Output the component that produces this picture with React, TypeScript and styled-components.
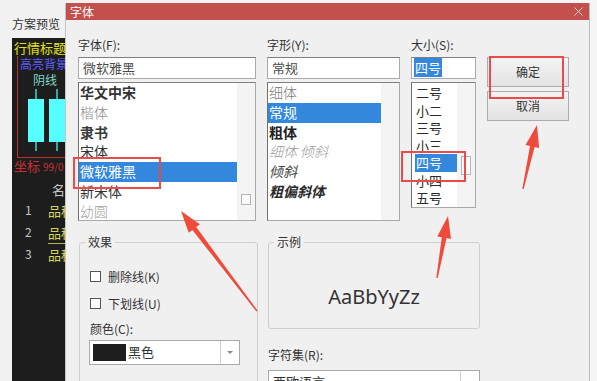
import React from "react";
import styled, { createGlobalStyle } from "styled-components";

const GlobalStyle = createGlobalStyle`
  html, body { margin: 0; padding: 0; background: #f5f5f5; }
  body { font-family: "Noto Sans CJK SC", "Noto Sans", sans-serif; }
  * { box-sizing: border-box; }
`;

const Desktop = styled.div`
  position: relative;
  width: 597px;
  height: 381px;
  overflow: hidden;
  background: #f5f5f5;
`;

/* ---------- window behind the dialog ---------- */

const BackWindow = styled.div`
  position: absolute;
  left: 0;
  top: 0;
  width: 200px;
  height: 381px;
  background: #f1f1f1;
  padding: 17px 0 0 12px;
  display: flex;
  flex-direction: column;
`;

const BackCaption = styled.div`
  font-size: 12px;
  line-height: 14px;
  color: #333;
  margin-bottom: 7px;
`;

const PreviewPanel = styled.div`
  flex: 1;
  width: 160px;
  background: #1d1d1d;
  padding: 2px 0 0 2px;
  display: flex;
  flex-direction: column;
  font-size: 13px;
  white-space: nowrap;
`;

const PanelTitle = styled.div`
  color: #e4e41c;
  line-height: 15px;
`;

const ChartBox = styled.div`
  margin: 1px 0 0 3px;
  border-left: 1px solid #b83030;
  border-bottom: 1px solid #b83030;
  padding-bottom: 5px;
  display: flex;
  flex-direction: column;
`;

const ChartText = styled.div<{ $color: string; $indent: number }>`
  color: ${(p) => p.$color};
  font-size: 12px;
  line-height: 16px;
  padding-left: ${(p) => p.$indent}px;
`;

const AxisLabel = styled.div`
  color: #c83030;
  line-height: 14px;
  margin-top: 1px;
  span { font-size: 10px; }
`;

const ColumnHead = styled.div`
  color: #c8c8c8;
  line-height: 14px;
  margin-top: 9px;
  padding-left: 38px;
  margin-bottom: 2px;
`;

const QuoteRow = styled.div`
  display: flex;
  height: 22px;
  line-height: 22px;
`;

const RowNo = styled.span`
  width: 34px;
  padding-left: 11px;
  color: #c8c8c8;
  font-size: 12px;
`;

const RowName = styled.span<{ $rule?: boolean }>`
  color: #d6d65a;
  border-top: 1px solid ${(p) => (p.$rule ? "#b4b45a" : "transparent")};
  padding-right: 40px;
`;

/* ---------- font dialog ---------- */

const Dialog = styled.div`
  position: absolute;
  left: 65px;
  top: 3px;
  width: 525px;
  height: 400px;
  background: #f0f0f0;
  border-left: 1px solid #c4c4c4;
  border-right: 1px solid #bdbdbd;
  display: flex;
  flex-direction: column;
`;

const TitleBar = styled.div`
  height: 22px;
  background: #c4504e;
  display: flex;
  align-items: center;
  justify-content: space-between;
  padding: 0 6px 0 4px;
  color: #fff;
  font-size: 12px;
`;

const Body = styled.div`
  padding: 18px 0 0 12px;
`;

const TopGrid = styled.div`
  display: grid;
  grid-template-columns: 178px 133px 65px 82px;
  column-gap: 11px;
`;

const Column = styled.div`
  display: flex;
  flex-direction: column;
`;

const Label = styled.div`
  height: 14px;
  font-size: 12px;
  line-height: 14px;
  color: #333;
  white-space: nowrap;
`;

const FieldLabel = styled(Label)`
  margin-bottom: 5px;
`;

const TextBox = styled.div`
  height: 22px;
  background: #fff;
  border: 1px solid #ababab;
  border-top-color: #7f7f7f;
  padding: 0 4px;
  font-size: 13px;
  line-height: 20px;
  color: #4a4a4a;
  white-space: nowrap;
`;

const SelectedText = styled.span`
  background: #3388de;
  color: #fff;
  padding: 0 1px;
  margin-left: -2px;
`;

const ListBox = styled.div<{ $h: number }>`
  margin-top: 3px;
  height: ${(p) => p.$h}px;
  background: #fff;
  border: 1px solid #a8a8a8;
  border-left-color: #707070;
  border-top-color: #808080;
  display: flex;
  overflow: hidden;
`;

const ListItems = styled.div<{ $pad: number; $top: number }>`
  flex: 1;
  padding: ${(p) => p.$top}px 0 0 ${(p) => p.$pad}px;
  min-width: 0;
`;

const Item = styled.div<{
  $h: number;
  $size: number;
  $sel?: boolean;
  $color?: string;
  $bold?: boolean;
  $light?: boolean;
  $italic?: boolean;
}>`
  height: ${(p) => p.$h}px;
  line-height: ${(p) => p.$h}px;
  padding-left: 1px;
  font-size: ${(p) => p.$size}px;
  white-space: nowrap;
  color: ${(p) => (p.$sel ? "#fff" : p.$color || "#2a2a2a")};
  background: ${(p) => (p.$sel ? "#3388de" : "transparent")};
  font-weight: ${(p) => (p.$bold ? 700 : p.$light ? 300 : 400)};
  font-style: ${(p) => (p.$italic ? "italic" : "normal")};
`;

const ScrollStrip = styled.div<{ $thumbTop: number }>`
  width: 18px;
  background: #f4f4f4;
  padding: ${(p) => p.$thumbTop}px 0 0 4px;
`;

const Thumb = styled.div<{ $h: number }>`
  width: 10px;
  height: ${(p) => p.$h}px;
  border: 1px solid #b4b4b4;
  background: #fafafa;
`;

const ButtonColumn = styled.div`
  padding-top: 19px;
  display: flex;
  flex-direction: column;
  gap: 4px;
`;

const Button = styled.div`
  height: 30px;
  border: 1px solid #adadad;
  background: linear-gradient(#f4f4f4, #e2e2e2);
  font-size: 12px;
  line-height: 28px;
  text-align: center;
  color: #333;
`;

const Bottom = styled.div`
  display: flex;
  gap: 10px;
  margin: 14px 0 0 1px;
`;

const Group = styled.fieldset<{ $w: number; $h: number }>`
  margin: 0;
  width: ${(p) => p.$w}px;
  height: ${(p) => p.$h}px;
  border: 1px solid #cfcfcf;
  border-radius: 3px;
  padding: 19px 10px 0 10px;
  min-width: 0;
`;

const Legend = styled.legend`
  font-size: 12px;
  line-height: 14px;
  color: #333;
  padding: 0 3px;
  margin-left: -5px;
`;

const CheckRow = styled.div`
  display: flex;
  align-items: center;
  gap: 7px;
  height: 16px;
  margin-bottom: 11px;
  font-size: 12px;
  color: #333;
`;

const CheckBox = styled.span`
  width: 11px;
  height: 11px;
  background: #fff;
  border: 1px solid #555;
`;

const ColorLabel = styled(Label)`
  margin-top: 3px;
  margin-bottom: 4px;
`;

const ComboBox = styled.div<{ $w: number; $h: number }>`
  width: ${(p) => p.$w}px;
  height: ${(p) => p.$h}px;
  background: #fff;
  border: 1px solid #a9a9a9;
  display: flex;
  align-items: stretch;
  font-size: 13px;
  color: #333;
`;

const ColorCombo = styled(ComboBox)`
  margin-left: -1px;
`;

const Swatch = styled.span`
  width: 33px;
  margin: 3px 2px 3px 3px;
  background: #1e1e1e;
`;

const ComboText = styled.span<{ $pad: number }>`
  flex: 1;
  padding-left: ${(p) => p.$pad}px;
  line-height: 22px;
  white-space: nowrap;
`;

const DropButton = styled.span`
  width: 19px;
  border-left: 1px solid #d4d4d4;
  display: flex;
  align-items: center;
  justify-content: center;
  &::after {
    content: "";
    border-left: 3px solid transparent;
    border-right: 3px solid transparent;
    border-top: 3px solid #8a8a8a;
  }
`;

const RightColumn = styled.div`
  display: flex;
  flex-direction: column;
`;

const SampleText = styled.div`
  padding-top: 18px;
  text-align: center;
  font-family: "Noto Sans", "Open Sans", sans-serif;
  font-size: 20px;
  line-height: 22px;
  color: #333;
`;

const CharsetLabel = styled(Label)`
  margin: 19px 0 8px;
`;

const Overlay = styled.svg`
  position: absolute;
  left: 0;
  top: 0;
  pointer-events: none;
`;

type Row = { t: string; sel?: boolean; color?: string; bold?: boolean; light?: boolean; italic?: boolean };

const fonts: Row[] = [
  { t: "华文中宋", bold: true, color: "#333" },
  { t: "楷体", color: "#8c8c8c", light: true },
  { t: "隶书", bold: true, color: "#3a3a3a" },
  { t: "宋体", color: "#333" },
  { t: "微软雅黑", sel: true },
  { t: "新宋体", color: "#333" },
  { t: "幼圆", color: "#a0a0a0", light: true },
];

const styles: Row[] = [
  { t: "细体", color: "#7a7a7a", light: true },
  { t: "常规", sel: true },
  { t: "粗体", bold: true, color: "#222" },
  { t: "细体 倾斜", italic: true, light: true, color: "#9a9a9a" },
  { t: "倾斜", italic: true, color: "#444" },
  { t: "粗偏斜体", italic: true, bold: true, color: "#2a2a2a" },
];

const sizes: Row[] = [
  { t: "二号" },
  { t: "小二" },
  { t: "三号" },
  { t: "小三" },
  { t: "四号", sel: true },
  { t: "小四" },
  { t: "五号" },
];

function arrow(tx: number, ty: number, px: number, py: number) {
  const dx = px - tx;
  const dy = py - ty;
  const len = Math.hypot(dx, dy);
  const ux = dx / len;
  const uy = dy / len;
  const nx = -uy;
  const ny = ux;
  const head = 22;
  const bx = px - ux * head;
  const by = py - uy * head;
  const pts: [number, number][] = [
    [tx + nx * 0.7, ty + ny * 0.7],
    [bx + nx * 2.4, by + ny * 2.4],
    [bx + nx * 7, by + ny * 7],
    [px, py],
    [bx - nx * 7, by - ny * 7],
    [bx - nx * 2.4, by - ny * 2.4],
    [tx - nx * 0.7, ty - ny * 0.7],
  ];
  return pts.map(([x, y]) => `${x.toFixed(1)},${y.toFixed(1)}`).join(" ");
}

const renderRows = (rows: Row[], h: number, size: number) =>
  rows.map((r) => (
    <Item
      key={r.t}
      $h={h}
      $size={size}
      $sel={r.sel}
      $color={r.color}
      $bold={r.bold}
      $light={r.light}
      $italic={r.italic}
    >
      {r.t}
    </Item>
  ));

export default function App() {
  return (
    <>
      <GlobalStyle />
      <Desktop>
        <BackWindow>
          <BackCaption>方案预览</BackCaption>
          <PreviewPanel>
            <PanelTitle>行情标题</PanelTitle>
            <ChartBox>
              <ChartText $color="#5c5cff" $indent={2}>高亮背景</ChartText>
              <ChartText $color="#7fd6c6" $indent={15}>阴线</ChartText>
              <svg width="60" height="64" viewBox="0 0 60 64">
                <line x1="18" y1="1" x2="18" y2="63" stroke="#5ff" strokeWidth="1.2" />
                <line x1="39" y1="1" x2="39" y2="63" stroke="#5ff" strokeWidth="1.2" />
                <rect x="10" y="11" width="16" height="43" fill="#5ff" />
                <rect x="31" y="11" width="16" height="43" fill="#5ff" />
              </svg>
            </ChartBox>
            <AxisLabel>
              坐标 <span>99/0</span>
            </AxisLabel>
            <ColumnHead>名</ColumnHead>
            <QuoteRow>
              <RowNo>1</RowNo>
              <RowName>品种</RowName>
            </QuoteRow>
            <QuoteRow>
              <RowNo>2</RowNo>
              <RowName>品种</RowName>
            </QuoteRow>
            <QuoteRow>
              <RowNo>3</RowNo>
              <RowName $rule>品种</RowName>
            </QuoteRow>
          </PreviewPanel>
        </BackWindow>

        <Dialog>
          <TitleBar>
            <span>字体</span>
            <svg width="9" height="9" viewBox="0 0 9 9">
              <path d="M0.5 0.5 L8.5 8.5 M8.5 0.5 L0.5 8.5" stroke="#f4d6d6" strokeWidth="1" />
            </svg>
          </TitleBar>
          <Body>
            <TopGrid>
              <Column>
                <FieldLabel>字体(F):</FieldLabel>
                <TextBox>微软雅黑</TextBox>
                <ListBox $h={139}>
                  <ListItems $pad={0} $top={0}>{renderRows(fonts, 19.8, 14)}</ListItems>
                  <ScrollStrip $thumbTop={111}>
                    <Thumb $h={11} />
                  </ScrollStrip>
                </ListBox>
              </Column>
              <Column>
                <FieldLabel>字形(Y):</FieldLabel>
                <TextBox>常规</TextBox>
                <ListBox $h={139}>
                  <ListItems $pad={0} $top={0}>{renderRows(styles, 19.8, 14)}</ListItems>
                  <ScrollStrip $thumbTop={0} />
                </ListBox>
              </Column>
              <Column>
                <FieldLabel>大小(S):</FieldLabel>
                <TextBox>
                  <SelectedText>四号</SelectedText>
                </TextBox>
                <ListBox $h={126}>
                  <ListItems $pad={3} $top={1}>{renderRows(sizes, 17.5, 13)}</ListItems>
                  <ScrollStrip $thumbTop={73}>
                    <Thumb $h={19} />
                  </ScrollStrip>
                </ListBox>
              </Column>
              <ButtonColumn>
                <Button>确定</Button>
                <Button>取消</Button>
              </ButtonColumn>
            </TopGrid>

            <Bottom>
              <Group $w={179} $h={200}>
                <Legend>效果</Legend>
                <CheckRow>
                  <CheckBox />
                  删除线(K)
                </CheckRow>
                <CheckRow>
                  <CheckBox />
                  下划线(U)
                </CheckRow>
                <ColorLabel>颜色(C):</ColorLabel>
                <ColorCombo $w={151} $h={25}>
                  <Swatch />
                  <ComboText $pad={0}>黑色</ComboText>
                  <DropButton />
                </ColorCombo>
              </Group>
              <RightColumn>
                <Group $w={212} $h={94}>
                  <Legend>示例</Legend>
                  <SampleText>AaBbYyZz</SampleText>
                </Group>
                <CharsetLabel>字符集(R):</CharsetLabel>
                <ComboBox $w={212} $h={24}>
                  <ComboText $pad={4}>西欧语言</ComboText>
                  <DropButton />
                </ComboBox>
              </RightColumn>
            </Bottom>
          </Body>
        </Dialog>

        <Overlay width="597" height="381" viewBox="0 0 597 381">
          <g fill="none" stroke="#ea4b48" strokeWidth="2">
            <rect x="74" y="158" width="86" height="30" />
            <rect x="402" y="152" width="63" height="29" />
            <rect x="490" y="57" width="73" height="41" />
          </g>
          <g fill="#f04a3c">
            <polygon points={arrow(257, 311, 181, 211)} />
            <polygon points={arrow(437, 278, 448, 216)} />
            <polygon points={arrow(523, 189, 537, 125)} />
          </g>
        </Overlay>
      </Desktop>
    </>
  );
}
